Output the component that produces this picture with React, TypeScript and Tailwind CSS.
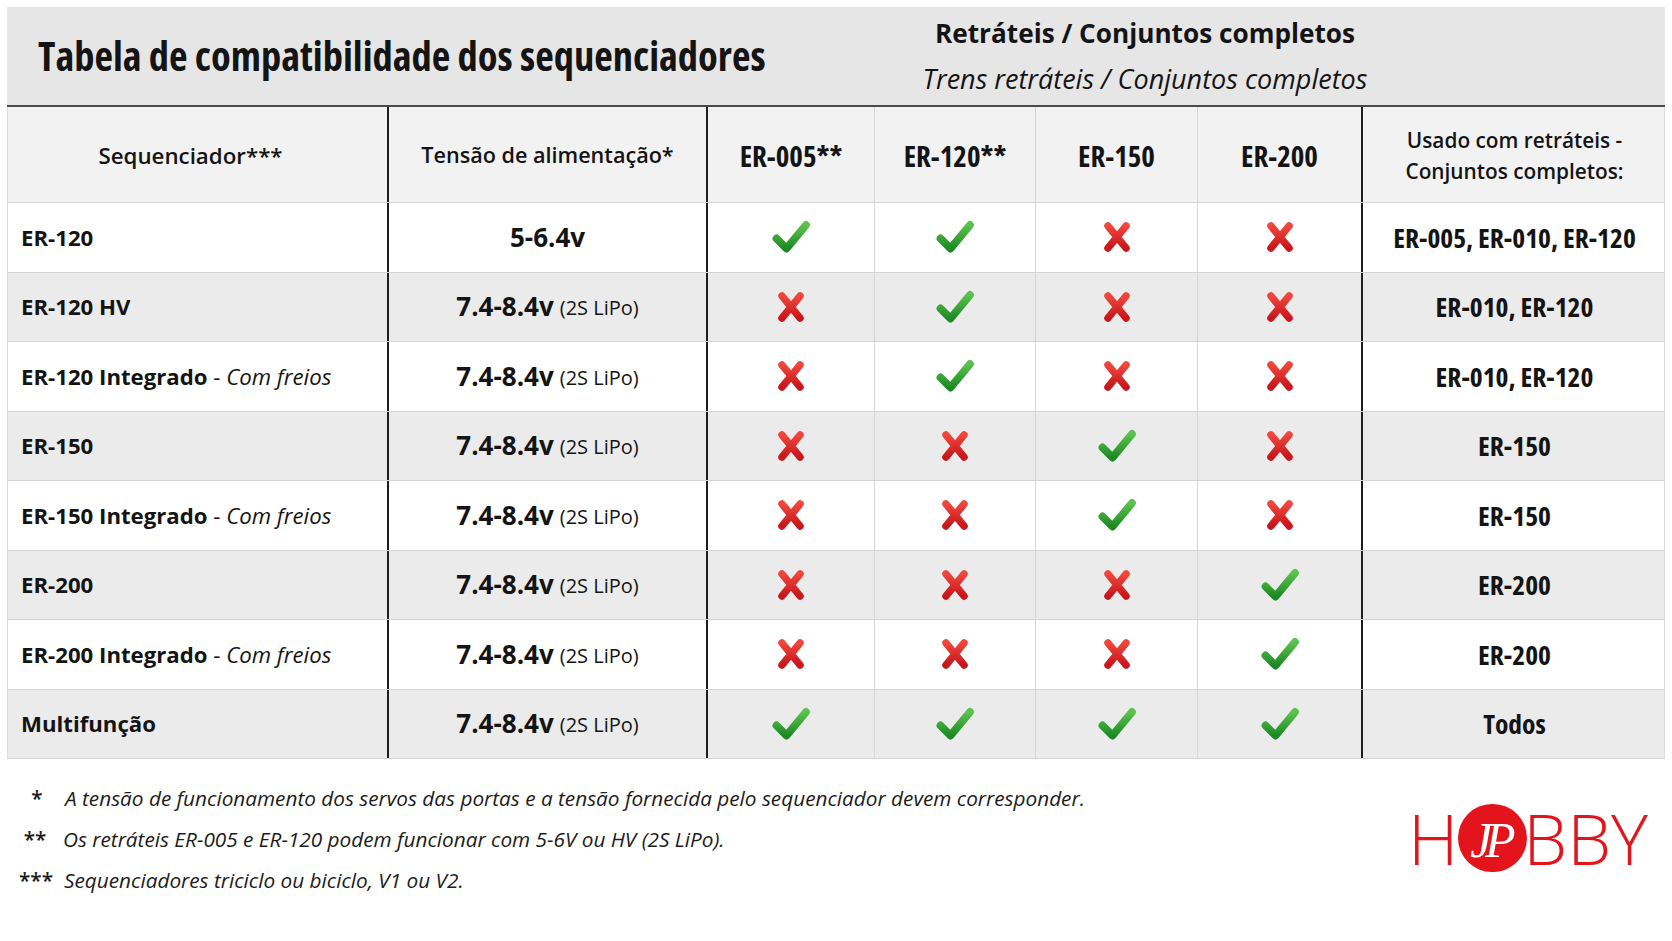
import React from "react";

type Row = {
  name: string;
  sub?: string;
  volt: string;
  lipo: boolean;
  c: number[];
  used: string;
};

const rows: Row[] = [
  { name: "ER-120", volt: "5-6.4v", lipo: false, c: [1, 1, 0, 0], used: "ER-005, ER-010, ER-120" },
  { name: "ER-120 HV", volt: "7.4-8.4v", lipo: true, c: [0, 1, 0, 0], used: "ER-010, ER-120" },
  { name: "ER-120 Integrado", sub: "Com freios", volt: "7.4-8.4v", lipo: true, c: [0, 1, 0, 0], used: "ER-010, ER-120" },
  { name: "ER-150", volt: "7.4-8.4v", lipo: true, c: [0, 0, 1, 0], used: "ER-150" },
  { name: "ER-150 Integrado", sub: "Com freios", volt: "7.4-8.4v", lipo: true, c: [0, 0, 1, 0], used: "ER-150" },
  { name: "ER-200", volt: "7.4-8.4v", lipo: true, c: [0, 0, 0, 1], used: "ER-200" },
  { name: "ER-200 Integrado", sub: "Com freios", volt: "7.4-8.4v", lipo: true, c: [0, 0, 0, 1], used: "ER-200" },
  { name: "Multifunção", volt: "7.4-8.4v", lipo: true, c: [1, 1, 1, 1], used: "Todos" },
];

function Check() {
  return (
    <svg width="40" height="34" viewBox="0 0 40 34">
      <defs>
        <linearGradient id="gchk" x1="0" y1="0" x2="0" y2="1">
          <stop offset="0" stopColor="#5cc24f" />
          <stop offset="1" stopColor="#1c8a23" />
        </linearGradient>
      </defs>
      <path
        d="M5.5 18.5 L15.5 28.5 L35 5"
        fill="none"
        stroke="url(#gchk)"
        strokeWidth="7.8"
        strokeLinecap="round"
        strokeLinejoin="round"
      />
    </svg>
  );
}

function Cross() {
  return (
    <svg width="32" height="34" viewBox="0 0 32 34">
      <defs>
        <linearGradient id="gx" x1="0" y1="0" x2="0" y2="1">
          <stop offset="0" stopColor="#f0463c" />
          <stop offset="1" stopColor="#c8161c" />
        </linearGradient>
      </defs>
      <path
        d="M7 6 L25 28 M25 6 L7 28"
        fill="none"
        stroke="url(#gx)"
        strokeWidth="7.5"
        strokeLinecap="round"
      />
    </svg>
  );
}

const grid = "grid grid-cols-[381px_319px_167px_161px_162px_165px_303px]";

export default function App() {
  return (
    <div className="w-[1672px] h-[941px] bg-white text-[#141414] [font-family:'Open_Sans',sans-serif] overflow-hidden">
      <div className="ml-[7px] mt-[7px] w-[1658px]">
        {/* Title band */}
        <div className="h-[100px] bg-[#e6e6e6] border-b-2 border-[#4a4a4a] flex">
          <div className="w-[818px] pl-[31px] flex items-center">
            <h1 className="text-[40.5px] leading-[40px] font-bold [font-stretch:75%]">
              Tabela de compatibilidade dos sequenciadores
            </h1>
          </div>
          <div className="w-[640px] flex flex-col items-center justify-center">
            <div className="text-[26.2px] leading-[45px] font-bold">Retráteis / Conjuntos completos</div>
            <div className="text-[27px] leading-[45px] italic">Trens retráteis / Conjuntos completos</div>
          </div>
        </div>

        {/* Header row */}
        <div className={grid + " h-[96px] bg-[#f2f2f2] border-b border-[#d2d2d2] border-x border-x-[#dcdcdc]"}>
          <div className="border-r-2 border-[#1e1e1e] flex items-center justify-center text-[22.3px] font-[650] pt-[2px] pr-[14px]">
            Sequenciador***
          </div>
          <div className="border-r-2 border-[#1e1e1e] flex items-center justify-center text-[21.6px] font-[650] pt-[2px]">
            Tensão de alimentação*
          </div>
          {["ER-005**", "ER-120**", "ER-150", "ER-200"].map((h, i) => (
            <div
              key={h}
              className={
                "flex items-center justify-center text-[29px] font-bold [font-stretch:75%] pt-[2px] " +
                (i === 3 ? "border-r-2 border-[#1e1e1e]" : "border-r border-[#d6d6d6]")
              }
            >
              {h}
            </div>
          ))}
          <div className="flex flex-col items-center justify-center text-[20.8px] leading-[31px] font-[650] pt-[2px]">
            <span>Usado com retráteis -</span>
            <span>Conjuntos completos:</span>
          </div>
        </div>

        {/* Data rows */}
        {rows.map((r, idx) => (
          <div
            key={r.name + (r.sub || "")}
            className={
              grid +
              " h-[69.5px] border-b border-[#d4d4d4] border-x border-x-[#dcdcdc] " +
              (idx % 2 === 1 ? "bg-[#ebebeb]" : "bg-white")
            }
          >
            <div className="border-r-2 border-[#1e1e1e] flex items-center pl-[13px] text-[22.2px]">
              <span className="font-bold">{r.name}</span>
              {r.sub && (
                <span className="whitespace-pre">
                  {" - "}
                  <span className="italic">{r.sub}</span>
                </span>
              )}
            </div>
            <div className="border-r-2 border-[#1e1e1e] flex items-center justify-center">
              <span className="text-[26px] font-bold">{r.volt}</span>
              {r.lipo && <span className="text-[20px] ml-[6px] pt-[3px]">(2S LiPo)</span>}
            </div>
            {r.c.map((v, i) => (
              <div
                key={i}
                className={
                  "flex items-center justify-center " +
                  (i === 3 ? "border-r-2 border-[#1e1e1e]" : "border-r border-[#d6d6d6]")
                }
              >
                {v ? <Check /> : <Cross />}
              </div>
            ))}
            <div className="flex items-center justify-center text-[27.5px] font-bold [font-stretch:75%]">{r.used}</div>
          </div>
        ))}
      </div>

      {/* Footnotes + logo */}
      <div className="flex mt-[19px]">
        <div className="flex-1 flex flex-col text-[20.75px] leading-[41px] text-[#1c1c1c]">
          <div className="flex">
            <span className="w-[40px] ml-[17px] text-center font-semibold">*</span>
            <span className="ml-[8px] italic">
              A tensão de funcionamento dos servos das portas e a tensão fornecida pelo sequenciador devem corresponder.
            </span>
          </div>
          <div className="flex">
            <span className="w-[40px] ml-[15px] text-center font-semibold">**</span>
            <span className="ml-[8px] italic">Os retráteis ER-005 e ER-120 podem funcionar com 5-6V ou HV (2S LiPo).</span>
          </div>
          <div className="flex">
            <span className="w-[40px] ml-[16px] text-center font-semibold">***</span>
            <span className="ml-[8px] italic">Sequenciadores triciclo ou biciclo, V1 ou V2.</span>
          </div>
        </div>
        <div className="mr-[24px] mt-[26px] h-[68px] flex items-center text-[#e3141c] text-[70px] font-light leading-none">
          <span>H</span>
          <div className="w-[69px] h-[68px] rounded-full bg-[#e3141c] flex items-center justify-center ml-[0px] mr-[-4px]">
            <span className="text-white italic [font-family:'Liberation_Serif',serif] text-[50px] tracking-[-7px] pr-[7px] pt-[4px]">
              JP
            </span>
          </div>
          <span>BBY</span>
        </div>
      </div>
    </div>
  );
}
